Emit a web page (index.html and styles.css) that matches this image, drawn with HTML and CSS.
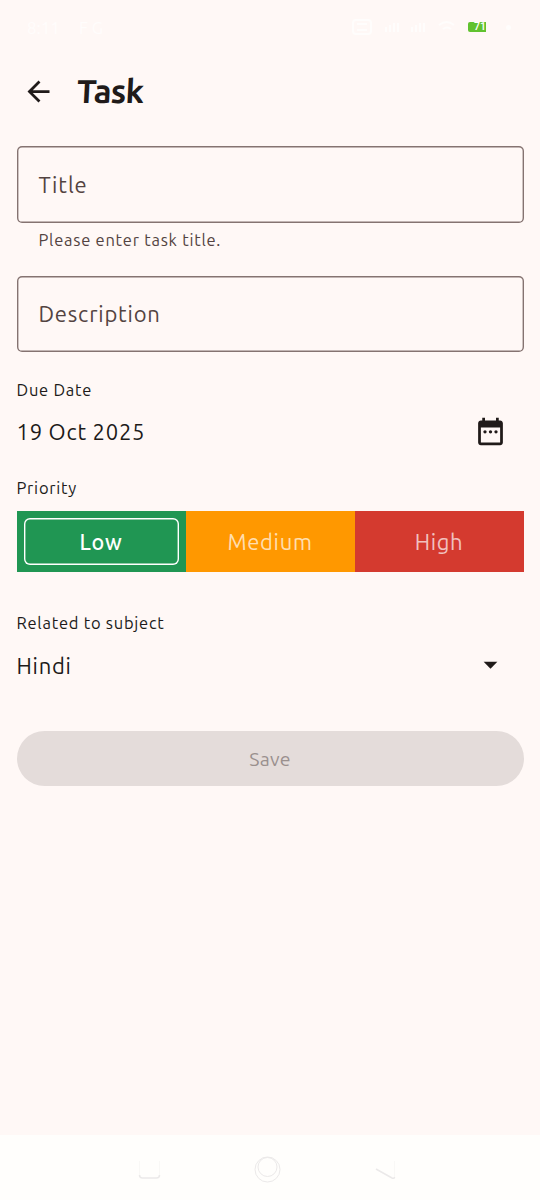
FILE: index.html
```html
<!DOCTYPE html>
<html lang="en">
<head>
<meta charset="utf-8">
<title>Task</title>
<link rel="stylesheet" href="styles.css">
</head>
<body>
<div class="screen">
  <div class="status">
    <span class="clock">8:11</span><span class="carrier">F G</span>
    <svg class="signals" width="104" height="20" viewBox="0 0 104 20" fill="none" stroke="#fffdfc" stroke-width="2">
      <rect x="2" y="3" width="18" height="14" rx="3"/><path d="M6 7h10M6 13h10M35 15v-5M39 15V8M43 15V6M47 15V6M61 15v-5M65 15V8M69 15V6M73 15V6M88 8q8-6 15 0M92 12q4-3 8 0"/>
    </svg>
    <span class="battery">71</span>
    <span class="charge"></span>
  </div>
  <header class="appbar">
    <svg class="back" width="33" height="33" viewBox="0 0 24 24" fill="#201a19"><path d="M20 11H7.830l5.590-5.590L12 4l-8 8 8 8 1.410-1.410L7.830 13H20z"/></svg>
    <h1>Task</h1>
  </header>
  <main class="form">
    <div class="field"><span class="ph-title">Title</span></div>
    <p class="helper">Please enter task title.</p>
    <div class="field"><span class="ph-desc">Description</span></div>
    <p class="label due">Due Date</p>
    <div class="row">
      <span class="date">19 Oct 2025</span>
      <svg class="calendar" width="33" height="33" viewBox="0 0 24 24" fill="#201a19"><path d="M19 4h-1V2h-2v2H8V2H6v2H5c-1.100 0-2 .9-2 2v14c0 1.100.9 2 2 2h14c1.100 0 2-.9 2-2V6c0-1.100-.9-2-2-2zm0 16H5V9h14z"/><circle cx="8" cy="12.200" r="1.200"/><circle cx="12" cy="12.200" r="1.200"/><circle cx="16" cy="12.200" r="1.200"/></svg>
    </div>
    <p class="label priority-label">Priority</p>
    <div class="priority">
      <div class="option low"><span>Low</span></div>
      <div class="option medium"><span>Medium</span></div>
      <div class="option high"><span>High</span></div>
    </div>
    <p class="label related">Related to subject</p>
    <div class="row">
      <span class="subject">Hindi</span>
      <svg class="caret" width="33" height="33" viewBox="0 0 24 24" fill="#201a19"><path d="M7 10l5 5 5-5z"/></svg>
    </div>
    <button class="save" disabled>Save</button>
  </main>
  <nav class="navbar">
    <svg width="540" height="65" viewBox="0 0 540 65" fill="none" stroke="#ebe9e9" stroke-width="1">
      <path stroke="#f9f8f6" d="M139.500 26v14M159.500 26v14"/><path stroke-width="1.500" d="M139.500 40q0 3 3 3h14q3 0 3-3"/>
      <circle cx="267.500" cy="34.500" r="12.500"/><circle cx="267.500" cy="32" r="9.500"/>
      <path stroke="#f9f8f6" d="M394.500 26v17"/><path stroke-width="1.500" d="M376 34l16 9q2.500 1 2.500-1"/>
    </svg>
  </nav>
</div>
</body>
</html>
```
FILE: styles.css
```css
* { box-sizing: border-box; }
body { margin: 0; background: #fff8f6; color: #201a19; font-family: Ubuntu, "Noto Sans", sans-serif; }
p, h1 { margin: 0; font-weight: 400; }
.screen { width: 540px; height: 1200px; display: flex; flex-direction: column; }
.status { height: 54px; padding: 0 28px 0 27px; display: flex; align-items: center; color: #fffdfc; font-size: 17px; }
.clock { width: 52px; }
.signals { margin-left: auto; margin-right: 13px; }
.battery { width: 18px; height: 10px; border-radius: 2px 0 0 2px; background: #61c22f; color: #fff; font: 500 10.500px/10px Roboto, sans-serif; text-align: right; }
.charge { width: 5px; height: 5px; margin: 0 1px 0 20px; border-radius: 50%; background: #fffdfc; }
.appbar { height: 92px; padding: 0 22px 18px; display: flex; align-items: center; }
.appbar h1 { margin-left: 22px; font: 700 33px/40px Ubuntu, Lato, sans-serif; letter-spacing: -.8px; transform: skewX(-3deg); }
.form { flex: 1; padding: 0 16.500px; display: flex; flex-direction: column; }
.field { height: 76.500px; flex: none; box-shadow: inset 0 0 0 1.400px #857371; border-radius: 5px; padding-left: 22px; display: flex; align-items: center; color: #534341; font-size: 22px; }
.ph-title { letter-spacing: .9px; }
.ph-desc { margin-top: -1px; letter-spacing: .8px; }
.helper { height: 53px; padding: 5px 0 0 22px; color: #534341; font-size: 16.500px; line-height: 24px; letter-spacing: .75px; }
.label { font-size: 16.500px; line-height: 24px; letter-spacing: .75px; }
.due { margin-top: 26px; }
.row { height: 60px; padding-right: 16.500px; display: flex; align-items: center; justify-content: space-between; font-size: 22px; letter-spacing: .75px; }
.row svg { margin-top: -1px; }
.date { margin-top: -2px; }
.priority-label { margin-top: 14px; }
.priority { height: 61px; margin-top: 11px; display: flex; }
.option { flex: 1; padding: 7px; color: rgba(255,255,255,.7); font-size: 22px; letter-spacing: .7px; }
.option span { height: 100%; display: flex; align-items: center; justify-content: center; }
.low { background: #209653; color: #fff; }
.low span { box-shadow: inset 0 0 0 1.400px #fff; border-radius: 6px; font-weight: 500; font-size: 21.500px; }
.medium { background: #ff9800; }
.high { background: #d43a2f; }
.related { margin-top: 39px; }
.subject { padding-top: 1px; }
.save { height: 55px; margin-top: 36px; border: 0; border-radius: 28px; background: #e4dcda; color: #9a908e; font: 19.500px Ubuntu, sans-serif; letter-spacing: .2px; }
.navbar { height: 65px; background: #fffefc; }
.navbar svg { display: block; }
```
